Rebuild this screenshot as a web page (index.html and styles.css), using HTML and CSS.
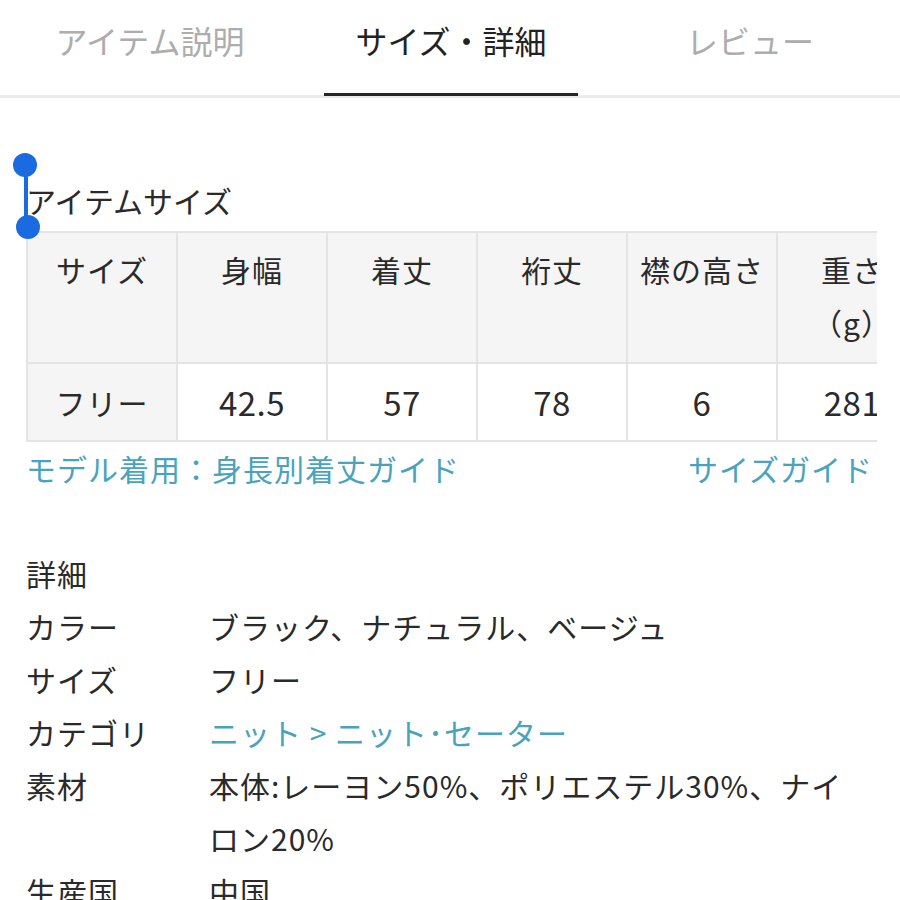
FILE: index.html
```html
<!DOCTYPE html>
<html lang="ja">
<head>
<meta charset="utf-8">
<title>サイズ・詳細</title>
<link rel="stylesheet" href="styles.css">
</head>
<body>
<nav class="tabs">
  <div class="tab">アイテム説明</div>
  <div class="tab tab-active">サイズ・詳細</div>
  <div class="tab">レビュー</div>
</nav>

<main class="content">
  <section class="size-section">
    <h2 class="section-title">アイテムサイズ</h2>
    <div class="selection">
      <span class="sel-knob sel-knob-top"></span>
      <span class="sel-bar"></span>
      <span class="sel-knob sel-knob-bottom"></span>
    </div>
    <div class="table-wrap">
      <table class="size-table">
        <colgroup>
          <col class="col"><col class="col"><col class="col"><col class="col"><col class="col"><col class="col">
        </colgroup>
        <thead>
          <tr>
            <th>サイズ</th>
            <th>身幅</th>
            <th>着丈</th>
            <th>裄丈</th>
            <th>襟の高さ</th>
            <th>重さ<br>（g）</th>
          </tr>
        </thead>
        <tbody>
          <tr>
            <td class="row-head">フリー</td>
            <td class="num">42.5</td>
            <td class="num">57</td>
            <td class="num">78</td>
            <td class="num">6</td>
            <td class="num">281</td>
          </tr>
        </tbody>
      </table>
    </div>
    <div class="guide-links">
      <a class="link">モデル着用：身長別着丈ガイド</a>
      <a class="link">サイズガイド</a>
    </div>
  </section>

  <section class="detail-section">
    <h2 class="section-title detail-title">詳細</h2>
    <dl class="detail-list">
      <div class="detail-row"><dt>カラー</dt><dd>ブラック、ナチュラル、ベージュ</dd></div>
      <div class="detail-row"><dt>サイズ</dt><dd>フリー</dd></div>
      <div class="detail-row"><dt>カテゴリ</dt><dd><a class="link">ニット &gt; ニット･セーター</a></dd></div>
      <div class="detail-row"><dt>素材</dt><dd>本体:レーヨン50%、ポリエステル30%、ナイロン20%</dd></div>
      <div class="detail-row"><dt>生産国</dt><dd>中国</dd></div>
    </dl>
  </section>
</main>
</body>
</html>
```

FILE: styles.css
```css
html, body {
  margin: 0;
  padding: 0;
  background: #ffffff;
}

body {
  font-family: "Noto Sans CJK JP", "Noto Sans", sans-serif;
  color: #2a2a2a;
  width: 900px;
  height: 900px;
  overflow: hidden;
}

.tabs {
  display: grid;
  grid-template-columns: 300px 300px 300px;
  border-bottom: 3px solid #ececec;
  height: 95px;
}

.tab {
  font-size: 32px;
  line-height: 80px;
  text-align: center;
  color: #adadad;
  height: 95px;
  box-sizing: border-box;
}

.tab-active {
  color: #222222;
  margin: 0 22px 0 24px;
  border-bottom: 3px solid #262626;
  height: 96px;
}

.content {
  padding: 0 23px 0 26px;
}

.size-section {
  position: relative;
  padding-top: 71px;
}

.section-title {
  margin: 0;
  font-size: 30px;
  font-weight: normal;
  line-height: 62px;
  color: #2a2a2a;
}

.selection {
  position: absolute;
  left: -13px;
  top: 55px;
  width: 30px;
  height: 90px;
}

.sel-knob {
  position: absolute;
  width: 24px;
  height: 24px;
  border-radius: 50%;
  background: #1b6be0;
}

.sel-knob-top {
  left: 0;
  top: 0;
}

.sel-knob-bottom {
  left: 3px;
  top: 62px;
}

.sel-bar {
  position: absolute;
  left: 11px;
  top: 12px;
  width: 4px;
  height: 62px;
  background: #1b6be0;
}

.table-wrap {
  width: 851px;
  overflow: hidden;
}

.size-table {
  border-collapse: collapse;
  table-layout: fixed;
  width: 902px;
  font-size: 30px;
  letter-spacing: 1px;
}

.size-table .col {
  width: 150px;
}

.size-table th,
.size-table td {
  border: 2px solid #e4e4e4;
  text-align: center;
  font-weight: normal;
  color: #2a2a2a;
  overflow: hidden;
}

.size-table th {
  background: #f5f5f5;
  vertical-align: top;
  line-height: 53px;
  padding: 10px 6px 13px;
  height: 106px;
}

.size-table td {
  background: #ffffff;
  line-height: 52px;
  padding: 12px 6px;
}

.size-table td.num {
  font-size: 33px;
  letter-spacing: 0.5px;
}

.size-table td.row-head {
  background: #f5f5f5;
}

.guide-links {
  display: flex;
  justify-content: space-between;
  font-size: 30px;
  letter-spacing: 1px;
  line-height: 52px;
  padding-right: 4px;
}

.link {
  color: #4aa3bd;
  text-decoration: none;
}

.detail-section {
  padding-top: 53px;
}

.detail-title {
  font-size: 30px;
  line-height: 53px;
  letter-spacing: 1px;
}

.detail-list {
  margin: 0;
  font-size: 30px;
  letter-spacing: 1px;
  line-height: 53px;
}

.detail-row {
  display: flex;
}

.detail-row dt {
  width: 183px;
  flex: none;
}

.detail-row dd {
  margin: 0;
  flex: 1;
  padding-right: 17px;
}
```
